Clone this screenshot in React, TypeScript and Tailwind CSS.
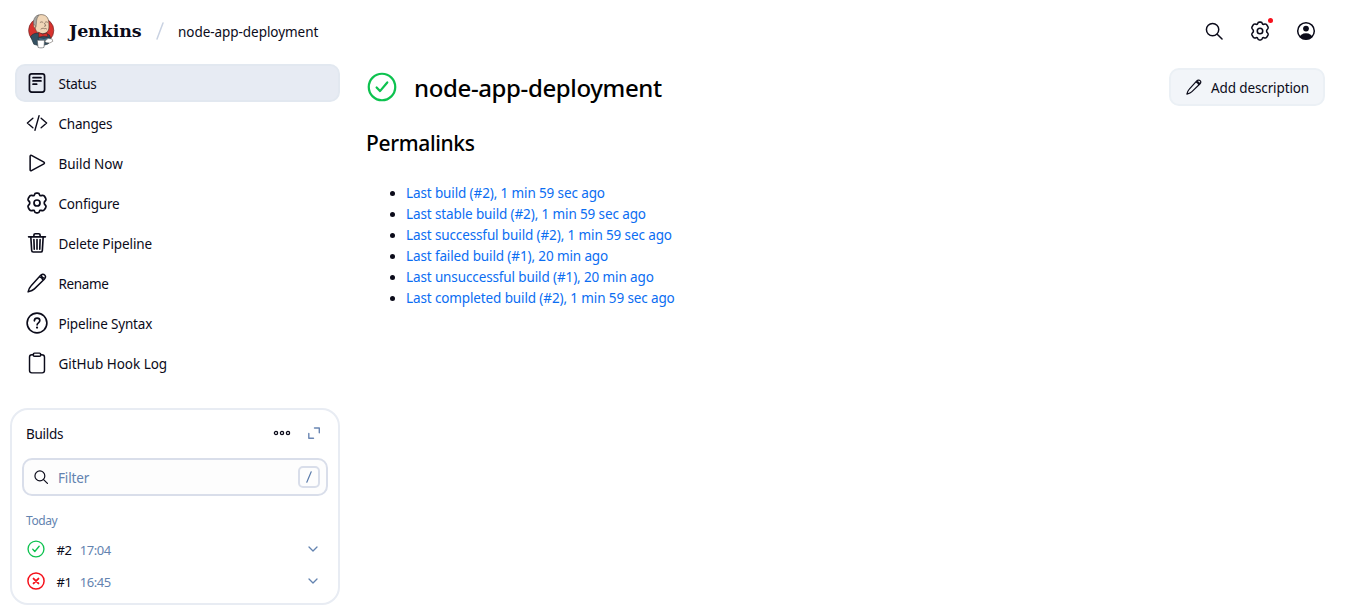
import React from "react";

type P = { className?: string };

const line = {
  fill: "none",
  stroke: "currentColor",
  strokeLinecap: "round" as const,
  strokeLinejoin: "round" as const,
};

const Icon = ({
  className = "size-[22px]",
  width = 32,
  children,
}: P & { width?: number; children: React.ReactNode }) => (
  <svg viewBox="0 0 512 512" className={`block shrink-0 ${className}`} {...line} strokeWidth={width}>
    {children}
  </svg>
);

const StatusIcon = () => (
  <Icon width={40}>
    <rect x="80" y="46" width="352" height="420" rx="52" />
    <path d="M164 132h184M164 208h184M164 284h84" width={34} />
  </Icon>
);
const CodeIcon = () => (
  <Icon>
    <path d="M160 368L32 256l128-112M352 368l128-112-128-112M304 86l-96 340" />
  </Icon>
);
const PlayIcon = () => (
  <Icon width={36}>
    <path d="M96 100v312c0 18 16 28 31 20l290-157c16-9 16-29 0-38L127 80c-15-8-31 2-31 20z" />
  </Icon>
);
const GearIcon = ({ className }: P) => (
  <Icon className={className} width={40}>
    <path d="M196 66Q204 28 240 28h32q36 0 44 38 6 28 38 18 22-10 42-6 24 4 38 28l26 46q16 30-8 52-28 24-28 52t28 52q24 22 8 52l-26 46q-14 24-38 28-20 4-42-6-32-10-38 18-8 38-44 38h-32q-36 0-44-38-6-28-38-18-22 10-42 6-24-4-38-28l-26-46q-16-30 8-52 28-24 28-52t-28-52q-24-22-8-52l26-46q14-24 38-28 20-4 42 6 32 10 38-18z" />
    <circle cx="256" cy="256" r="70" />
  </Icon>
);
const TrashIcon = () => (
  <Icon width={38}>
    <path d="M112 112l20 320c1 20 15 34 36 34h176c21 0 34-14 36-34l20-320M60 112h392M184 108V72c0-18 10-30 30-30h84c20 0 30 12 30 30v36M256 176v224M184 176l8 224M328 176l-8 224" />
  </Icon>
);
const PencilIcon = ({ className }: P) => (
  <Icon className={className} width={38}>
    <path d="M344 62c32-32 80-38 108-10s22 76-10 108L190 406c-34 34-92 58-162 78 20-70 44-124 78-158zM318 92c38 12 80 54 92 92M372 50c-4 50 36 88 88 84" />
  </Icon>
);
const HelpIcon = () => (
  <Icon width={38}>
    <circle cx="256" cy="256" r="230" />
    <path d="M194 206c2-42 28-62 64-62 38 0 64 24 64 56 0 54-64 48-64 100" width={44} />
    <circle cx="257" cy="362" r="14" fill="currentColor" strokeWidth="24" />
  </Icon>
);
const ClipboardIcon = () => (
  <Icon width={34}>
    <path d="M336 64h32c36 0 62 20 62 54v314c0 34-20 54-54 54H136c-34 0-54-20-54-54V118c0-34 20-54 54-54h40" />
    <rect x="168" y="26" width="176" height="72" rx="30" />
  </Icon>
);
const SearchIcon = ({ className }: P) => (
  <Icon className={className} width={38}>
    <circle cx="220" cy="220" r="158" />
    <path d="M338 338l124 124" />
  </Icon>
);
const UserIcon = () => (
  <svg viewBox="0 0 20 20" className="block size-5" fill="none">
    <clipPath id="avatar">
      <circle cx="10" cy="10" r="8.6" />
    </clipPath>
    <g clipPath="url(#avatar)" fill="currentColor">
      <circle cx="10" cy="7.6" r="2.9" />
      <ellipse cx="10" cy="17.2" rx="6.6" ry="5" />
    </g>
    <circle cx="10" cy="10" r="8.3" stroke="currentColor" strokeWidth="1.5" />
  </svg>
);
const Chevron = () => (
  <svg viewBox="0 0 12 12" className="block size-3" {...line} strokeWidth="1.3">
    <path d="M2 4l4 4 4-4" />
  </svg>
);
const Check = ({ className }: P) => (
  <Icon className={`text-[#0dc24f] ${className}`} width={38}>
    <circle cx="256" cy="256" r="226" />
    <path d="M346 178L222 326l-58-62" />
  </Icon>
);
const Fail = () => (
  <Icon className="size-[18px] text-[#f5101a]" width={42}>
    <circle cx="256" cy="256" r="230" />
    <path d="M186 186l140 140M326 186L186 326" strokeWidth="52" />
  </Icon>
);

const Logo = () => (
  <svg viewBox="0 0 28 36" className="block h-9 w-7">
    <circle cx="14.2" cy="17.5" r="12.6" fill="#d8322d" stroke="#612222" strokeWidth="0.6" />
    <path d="M3.5 23.5C5 21.4 7 20.5 10 20l8 .3 4.5 1.8 1.8 5.6-3.2 3.2-7.6 2.4-6.7-2.1z" fill="#335061" stroke="#1c2a33" strokeWidth="0.6" />
    <path d="M7.5 12C6.6 6 9.4 1.6 14.2 1.6c4.6 0 7.4 3 7.6 7.8.1 3.2.6 6.2-.8 8.4-1.4 2.5-4 3.2-7.2 2.8-3-.4-5.7-2.6-6.3-8.6z" fill="#f0d6b7" stroke="#50443c" strokeWidth="0.6" />
    <path d="M7.4 14C5.6 10.7 6 3.5 11.2 2.1c1.6-.4-.4 1.5-1.1 3.3-.8 2.2-.5 4.4-1.1 8.6z" fill="#a5a5a1" stroke="#5c5550" strokeWidth="0.5" />
    <path d="M8.2 12c-1.4-.6-2 .8-1.2 2 .5.8 1.1 1 1.7.8z" fill="#f0d6b7" stroke="#6c4d3f" strokeWidth="0.5" />
    <path d="M13.2 9.4c.9-.8 2-.7 2.7 0M18.3 9.2c.7-.6 1.6-.5 2.3.1M17.5 10.2l1.3 2.6-1.4.4M14 16c1.4-1.1 2.6-.9 3.5-.3.9-.5 1.6-.2 2.2.4" fill="none" stroke="#6a5547" strokeWidth="0.7" strokeLinecap="round" />
    <path d="M11.5 19.2l4.2 2 4.3-1.3.8 3.7-4.7-.5-4.2 1.2z" fill="#d8322d" stroke="#5d1f1f" strokeWidth="0.6" />
    <path d="M11 24.6l6 .8 5-1 1.2 2.4-5.4 1.4-5.8-.8z" fill="#49728b" stroke="#1c2a33" strokeWidth="0.5" />
    <path d="M10.3 27.2h7.2l-.5 7.1c-1.8.8-4.2.8-6 0z" fill="#fff" stroke="#4d5358" strokeWidth="0.6" />
    <path d="M17.6 28.2l3.4-2.6 4 .3.8 2.4-3 1.7-3.2-.3z" fill="#fff" stroke="#6b6661" strokeWidth="0.6" />
  </svg>
);

const tasks = [
  { label: "Status", icon: <StatusIcon />, track: "tracking-[-0.25px]", active: true },
  { label: "Changes", icon: <CodeIcon />, track: "tracking-[-0.2px]" },
  { label: "Build Now", icon: <PlayIcon />, track: "tracking-[-0.05px]" },
  { label: "Configure", icon: <GearIcon />, track: "tracking-[-0.2px]" },
  { label: "Delete Pipeline", icon: <TrashIcon />, track: "tracking-[-0.1px]" },
  { label: "Rename", icon: <PencilIcon className="size-5 ml-px mr-px" />, track: "tracking-[-0.35px]" },
  { label: "Pipeline Syntax", icon: <HelpIcon />, track: "tracking-[-0.17px]" },
  { label: "GitHub Hook Log", icon: <ClipboardIcon />, track: "tracking-[-0.02px]" },
];

const permalinks = [
  "Last build (#2), 1 min 59 sec ago",
  "Last stable build (#2), 1 min 59 sec ago",
  "Last successful build (#2), 1 min 59 sec ago",
  "Last failed build (#1), 20 min ago",
  "Last unsuccessful build (#1), 20 min ago",
  "Last completed build (#2), 1 min 59 sec ago",
];

const builds = [
  { id: "#2", time: "17:04", icon: <Check className="size-[18px]" /> },
  { id: "#1", time: "16:45", icon: <Fail /> },
];

function Header() {
  return (
    <header className="flex h-16 items-center pl-[27px] pr-[35px] pb-[2px]">
      <Logo />
      <span className="ml-[14px] w-[73px] whitespace-nowrap font-['DejaVu_Serif','Liberation_Serif',serif] text-[17.5px] font-bold leading-6 tracking-[-0.15px]">Jenkins</span>
      <svg viewBox="0 0 8 18" className="ml-[14px] block h-[18px] w-2 text-[#c9d2e2]" {...line} strokeWidth="1.5">
        <path d="M1 17L7 1" />
      </svg>
      <span className="ml-[14px] pt-[3px] tracking-[-0.05px]">node-app-deployment</span>
      <div className="ml-auto flex items-center gap-[26px]">
        <SearchIcon className="size-5" />
        <span className="relative">
          <GearIcon className="size-5" />
          <span className="absolute -right-[3px] -top-[3px] size-[5px] rounded-full bg-[#f6101c]" />
        </span>
        <UserIcon />
      </div>
    </header>
  );
}

function Sidebar() {
  return (
    <aside className="w-[340px] shrink-0">
      <nav className="ml-[15px] flex flex-col gap-[2px]">
        {tasks.map((t) => (
          <a
            key={t.label}
            className={`flex h-[38px] items-center gap-[10.5px] rounded-[10px] border-2 pl-[9px] ${t.active ? "border-[#e2e8f0] bg-[#e7ebf3]" : "border-transparent"}`}
          >
            {t.icon}
            <span className={`pt-[3px] ${t.track}`}>{t.label}</span>
          </a>
        ))}
      </nav>
      <section className="ml-[10px] mt-[26px] h-[197px] rounded-[18px] border-2 border-[#e8ecf3] px-[10px] pt-[11px]">
        <div className="flex h-6 items-center pl-1 pr-[8px]">
          <span className="pt-[3px] tracking-[-0.3px]">Builds</span>
          <svg viewBox="0 0 18 6" className="ml-auto block h-[6px] w-[18px]" {...line} strokeWidth="1.3">
            <circle cx="3" cy="3" r="1.6" />
            <circle cx="9" cy="3" r="1.6" />
            <circle cx="15" cy="3" r="1.6" />
          </svg>
          <svg viewBox="0 0 12 12" className="ml-[17px] block size-3 text-[#6a86b3]" {...line} strokeWidth="1.4">
            <path d="M6.5 1h4.8v4.8M5.5 11.2H.8V6.5" />
          </svg>
        </div>
        <div className="mt-[13px] flex h-[38px] items-center rounded-[10px] border-2 border-[#d9deea] bg-[#fdfdfd] pl-[9px] pr-[6px]">
          <SearchIcon className="size-4" />
          <span className="ml-[9px] pt-[3px] tracking-[-0.15px] text-[#6383b0]">Filter</span>
          <kbd className="ml-auto flex h-[22px] w-[22px] items-center justify-center rounded-[5px] border-2 border-[#d9deea] text-[#5b7cab]">
            <svg viewBox="0 0 6 12" className="block h-3 w-[6px]" {...line} strokeWidth="1.2">
              <path d="M.8 11.2L5.2.8" />
            </svg>
          </kbd>
        </div>
        <div className="mt-[15px] pl-1 text-[12px] leading-5 tracking-[-0.4px] text-[#6383b0]">Today</div>
        <div className="pt-[2px]">
          {builds.map((b) => (
            <div key={b.id} className="flex h-8 items-center pl-[5px] pr-[9.5px] text-[13px] tracking-[-0.5px]">
              {b.icon}
              <span className="ml-[11.5px] pt-[3px]">{b.id}</span>
              <span className="ml-[8.5px] pt-[3px] text-[#6383b0]">{b.time}</span>
              <span className="ml-auto text-[#6383b0]">
                <Chevron />
              </span>
            </div>
          ))}
        </div>
      </section>
    </aside>
  );
}

export default function App() {
  return (
    <div className="h-[605px] w-[1351px] overflow-hidden whitespace-nowrap bg-white font-['Noto_Sans','Open_Sans',sans-serif] text-[13.5px] leading-[21px] text-[#0b0b1a]">
      <Header />
      <div className="flex">
        <Sidebar />
        <main className="flex-1 pl-[26px] pr-[26px]">
          <div className="flex h-[42px] items-center pt-1">
            <Check className="mx-px size-[30px]" />
            <h1 className="ml-4 pt-[2px] text-[24px] font-medium leading-8 tracking-[-0.37px] text-black">node-app-deployment</h1>
            <button className="ml-auto flex h-[38px] w-[156px] items-center rounded-[10px] border-2 border-[#ebf0f5] bg-[#f2f5f9] pl-[15px]">
              <PencilIcon className="size-4" />
              <span className="ml-[9px] pt-[3px] tracking-[-0.12px]">Add description</span>
            </button>
          </div>
          <h2 className="mt-[22px] text-[21px] font-medium leading-[30px] tracking-[-0.35px] text-black">Permalinks</h2>
          <ul className="mt-[25px] list-disc pl-10 tracking-[-0.12px]">
            {permalinks.map((p) => (
              <li key={p}>
                <a className="text-[#0b6df2]">{p}</a>
              </li>
            ))}
          </ul>
        </main>
      </div>
    </div>
  );
}
